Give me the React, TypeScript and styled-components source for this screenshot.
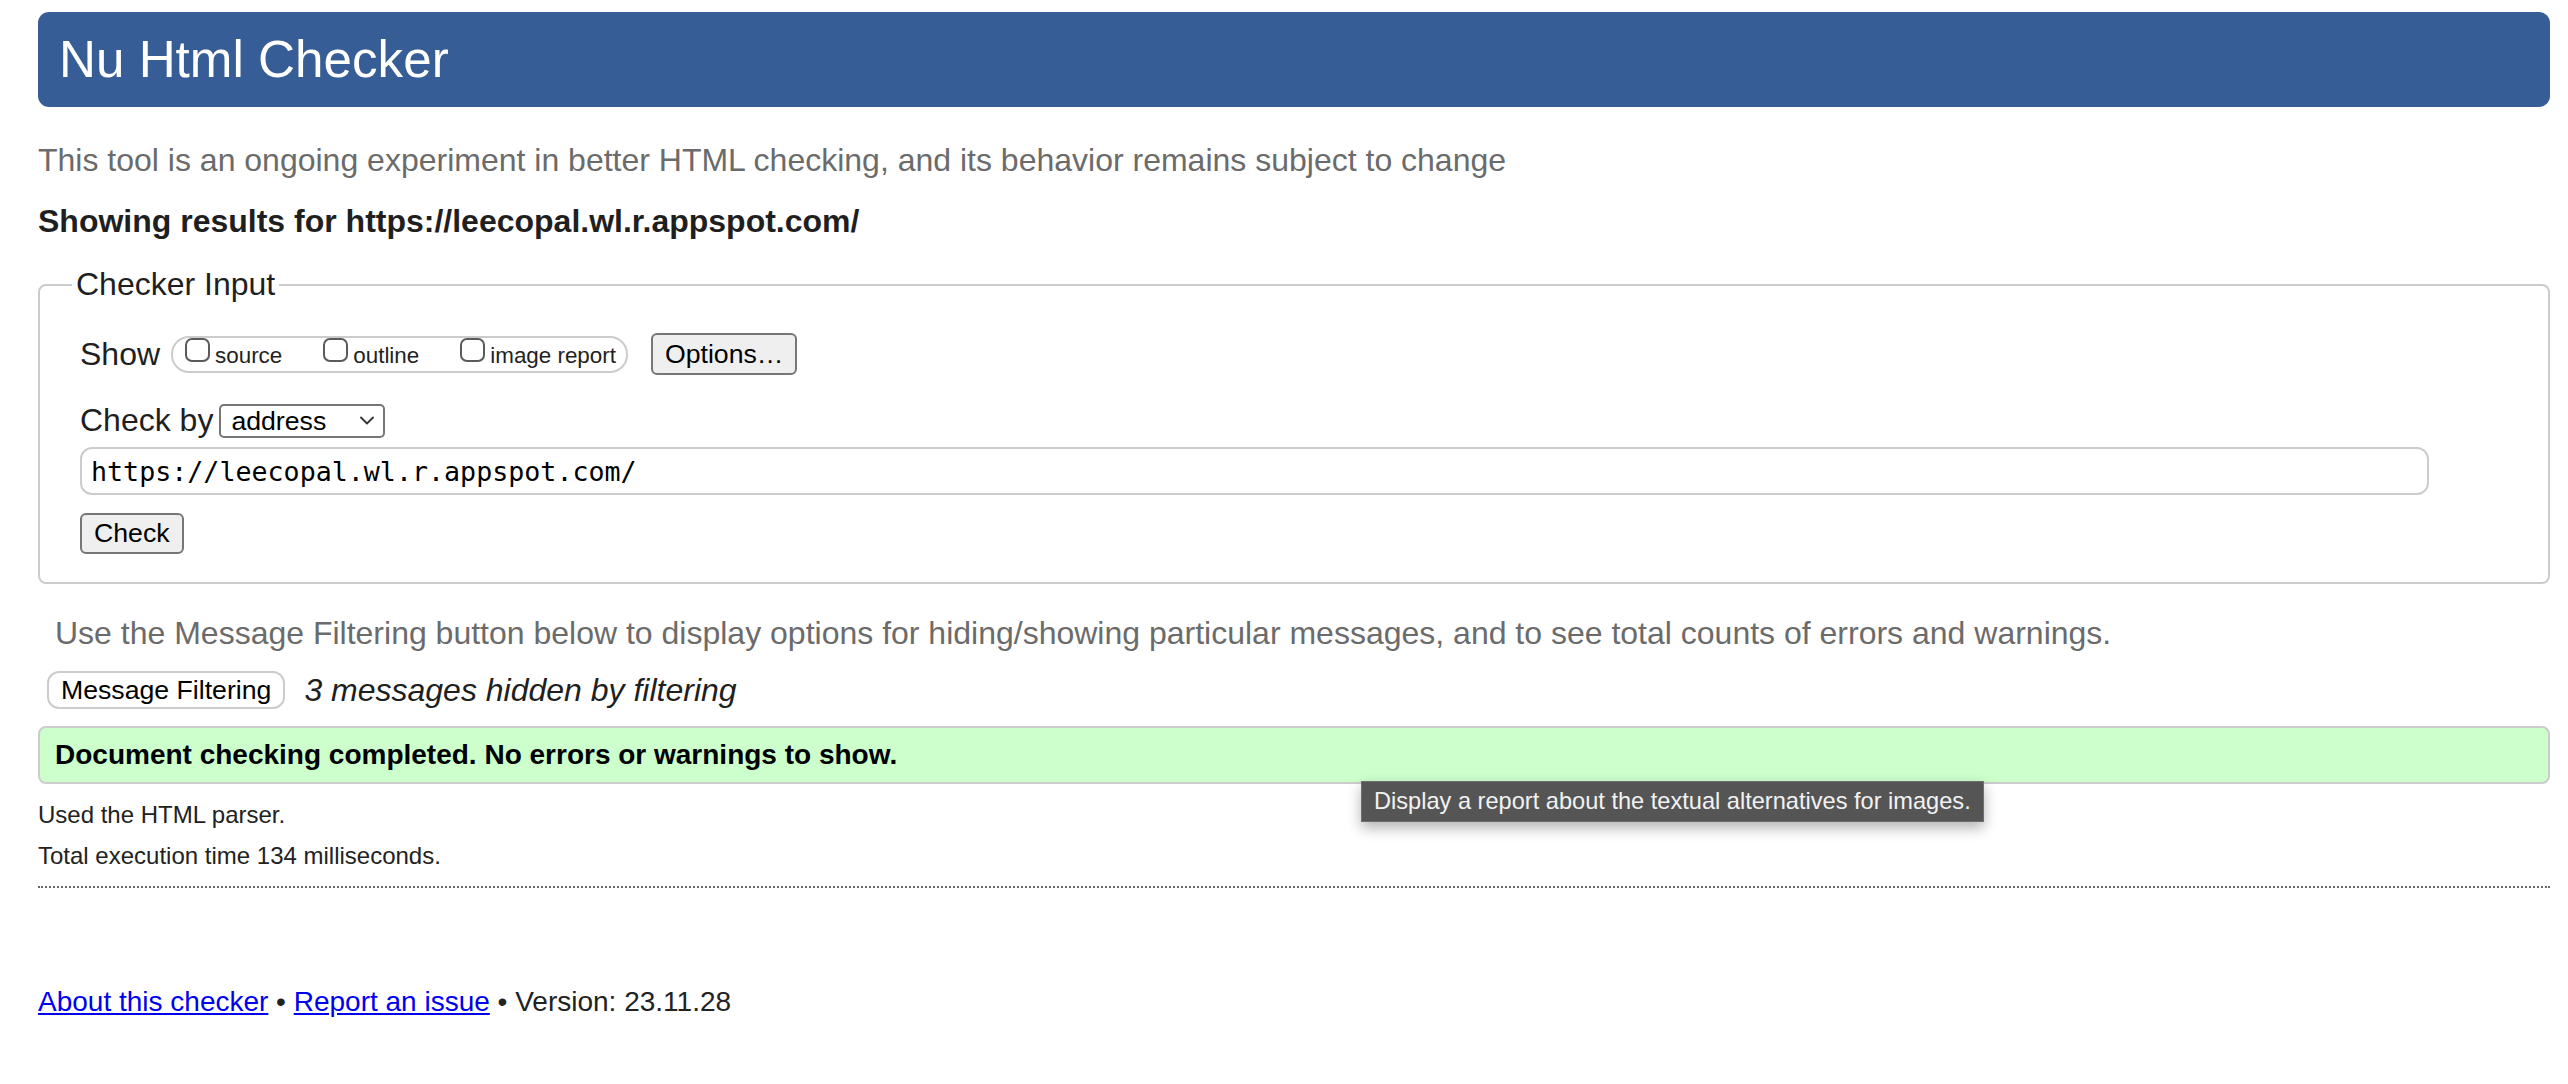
import React from "react";
import styled, { createGlobalStyle } from "styled-components";

const GlobalStyle = createGlobalStyle`
  html, body { margin: 0; padding: 0; background: #fff; }
  body {
    font-family: "Liberation Sans", Arial, Helvetica, sans-serif;
    color: #222;
  }
  *, *::before, *::after { box-sizing: border-box; }
`;

const Page = styled.div`
  position: relative;
  min-height: 1084px;
  padding: 12px 18px 40px 38px;
`;

const Header = styled.h1`
  margin: 0;
  height: 95px;
  padding: 18px 21px;
  background: #365d95;
  color: #fff;
  font-size: 51.2px;
  line-height: 59px;
  font-weight: normal;
  border-radius: 11px;
`;

const Intro = styled.p`
  margin: 35px 0 0;
  font-size: 32px;
  line-height: 37px;
  color: #6b6b6b;
`;

const ResultsFor = styled.h2`
  margin: 24px 0 0;
  font-size: 32px;
  line-height: 37px;
  font-weight: bold;
  color: #1f1f1f;
`;

const Fieldset = styled.fieldset`
  margin: 26px 0 0;
  padding: 30px 40px 28px 40px;
  border: 2px solid #ccc;
  border-radius: 8px;
  min-inline-size: 0;
`;

const Legend = styled.legend`
  margin-left: -8px;
  padding: 0 4px;
  font-size: 32px;
  line-height: 37px;
  color: #1f1f1f;
`;

const Row = styled.div<{ $height: number; $top?: number }>`
  display: flex;
  align-items: center;
  height: ${(p) => p.$height}px;
  margin-top: ${(p) => p.$top ?? 0}px;
`;

const RowLabel = styled.span`
  font-size: 32px;
  line-height: 37px;
  color: #1f1f1f;
`;

const CheckGroup = styled.div`
  display: flex;
  align-items: flex-start;
  gap: 41px;
  height: 37px;
  margin-left: 11px;
  padding: 0 10px 0 12px;
  border: 2px solid #ccc;
  border-radius: 18px;
`;

const Option = styled.label`
  display: flex;
  align-items: flex-start;
  font-size: 22.4px;
  line-height: 26px;
  color: #222;
`;

const Checkbox = styled.input`
  appearance: none;
  width: 25px;
  height: 24px;
  margin: 0 5px 0 0;
  border: 2px solid #5a5a5a;
  border-radius: 7px;
  background: #fff;
`;

const OptionText = styled.span`
  padding-top: 5px;
`;

const GrayButton = styled.button<{ $height: number; $left?: number }>`
  height: ${(p) => p.$height}px;
  margin-left: ${(p) => p.$left ?? 0}px;
  padding: 0 12px;
  font-family: "Liberation Sans", Arial, sans-serif;
  font-size: 26.67px;
  color: #000;
  background: #efefef;
  border: 2px solid #767676;
  border-radius: 6px;
`;

const SelectWrap = styled.span`
  position: relative;
  display: inline-flex;
  margin-left: 6px;
`;

const Select = styled.select`
  appearance: none;
  width: 166px;
  height: 34px;
  padding: 0 40px 0 10px;
  font-family: "Liberation Sans", Arial, sans-serif;
  font-size: 26.67px;
  color: #000;
  background: #fff;
  border: 2px solid #767676;
  border-radius: 5px;
`;

const Chevron = styled.svg`
  position: absolute;
  right: 11px;
  top: 12px;
  width: 14px;
  height: 9px;
  pointer-events: none;
`;

const UrlInput = styled.input`
  display: block;
  width: calc(100% - 79px);
  height: 48px;
  margin-top: 8px;
  padding: 0 9px;
  font-family: "DejaVu Sans Mono", "Liberation Mono", monospace;
  font-size: 26.67px;
  color: #000;
  background: #fff;
  border: 2px solid #ccc;
  border-radius: 12px;
`;

const ButtonRow = styled.div`
  margin-top: 18px;
`;

const FilterHint = styled.p`
  margin: 31px 0 0 17px;
  font-size: 32px;
  line-height: 37px;
  color: #6b6b6b;
`;

const FilterRow = styled.div`
  display: flex;
  align-items: center;
  gap: 19px;
  margin-top: 19px;
  padding-left: 9px;
`;

const FilterButton = styled.button`
  height: 38px;
  padding: 0 12px;
  font-family: "Liberation Sans", Arial, sans-serif;
  font-size: 26.67px;
  color: #000;
  background: #fff;
  border: 2px solid #ccc;
  border-radius: 12px;
`;

const HiddenNote = styled.span`
  font-size: 32px;
  line-height: 37px;
  font-style: italic;
  color: #1f1f1f;
`;

const Success = styled.div`
  display: flex;
  align-items: center;
  height: 58px;
  margin-top: 17px;
  padding: 0 15px;
  background: #ccffcc;
  border: 2px solid #ccc;
  border-radius: 8px;
  font-size: 28px;
  font-weight: bold;
  color: #000;
`;

const Meta = styled.p<{ $top: number }>`
  margin: ${(p) => p.$top}px 0 0;
  font-size: 24px;
  line-height: 28px;
  color: #222;
`;

const Rule = styled.hr`
  height: 0;
  margin: 16px 0 0;
  border: 0;
  border-top: 2px dotted #666;
`;

const Footer = styled.p`
  margin: 98px 0 0;
  font-size: 28px;
  line-height: 32px;
  color: #222;
`;

const Link = styled.a`
  color: #0000ee;
  text-decoration: underline;
`;

const Tooltip = styled.div`
  position: absolute;
  left: 1361px;
  top: 781px;
  padding: 6px 12px;
  font-size: 23.6px;
  line-height: 27px;
  color: #f2f2f2;
  background: #555;
  border: 1px solid #6f6f6f;
  box-shadow: 0 6px 14px rgba(0, 0, 0, 0.3);
  white-space: nowrap;
`;

export default function App() {
  return (
    <Page>
      <GlobalStyle />
      <Header>Nu Html Checker</Header>
      <Intro>
        This tool is an ongoing experiment in better HTML checking, and its behavior remains subject to change
      </Intro>
      <ResultsFor>Showing results for https://leecopal.wl.r.appspot.com/</ResultsFor>

      <Fieldset>
        <Legend>Checker Input</Legend>
        <Row $height={42}>
          <RowLabel>Show</RowLabel>
          <CheckGroup>
            <Option>
              <Checkbox type="checkbox" />
              <OptionText>source</OptionText>
            </Option>
            <Option>
              <Checkbox type="checkbox" />
              <OptionText>outline</OptionText>
            </Option>
            <Option>
              <Checkbox type="checkbox" />
              <OptionText>image report</OptionText>
            </Option>
          </CheckGroup>
          <GrayButton type="button" $height={42} $left={23}>
            Options…
          </GrayButton>
        </Row>
        <Row $height={37} $top={27}>
          <RowLabel>Check by</RowLabel>
          <SelectWrap>
            <Select defaultValue="address">
              <option value="address">address</option>
              <option value="file">file upload</option>
              <option value="text">text input</option>
            </Select>
            <Chevron viewBox="0 0 14 9" fill="none">
              <path d="M1 1.5 L7 7.5 L13 1.5" stroke="#333" strokeWidth="1.8" strokeLinecap="round" strokeLinejoin="round" />
            </Chevron>
          </SelectWrap>
        </Row>
        <UrlInput type="text" defaultValue="https://leecopal.wl.r.appspot.com/" />
        <ButtonRow>
          <GrayButton type="button" $height={41}>
            Check
          </GrayButton>
        </ButtonRow>
      </Fieldset>

      <FilterHint>
        Use the Message Filtering button below to display options for hiding/showing particular messages, and to see
        total counts of errors and warnings.
      </FilterHint>
      <FilterRow>
        <FilterButton type="button">Message Filtering</FilterButton>
        <HiddenNote>3 messages hidden by filtering</HiddenNote>
      </FilterRow>

      <Success>Document checking completed. No errors or warnings to show.</Success>

      <Meta $top={17}>Used the HTML parser.</Meta>
      <Meta $top={13}>Total execution time 134 milliseconds.</Meta>
      <Rule />

      <Footer>
        <Link href="#about">About this checker</Link> • <Link href="#issue">Report an issue</Link> • Version: 23.11.28
      </Footer>

      <Tooltip>Display a report about the textual alternatives for images.</Tooltip>
    </Page>
  );
}
